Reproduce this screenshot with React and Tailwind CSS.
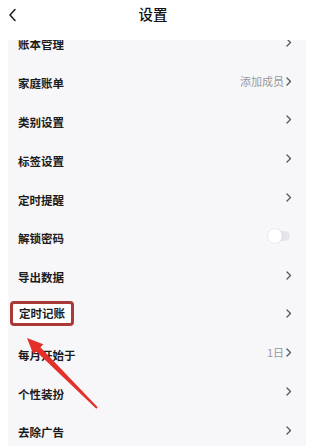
import React from "react";

const rows = [
  { label: "账本管理", type: "chev" },
  { label: "家庭账单", type: "chev", value: "添加成员" },
  { label: "类别设置", type: "chev" },
  { label: "标签设置", type: "chev" },
  { label: "定时提醒", type: "chev" },
  { label: "解锁密码", type: "toggle" },
  { label: "导出数据", type: "chev" },
  { label: "定时记账", type: "chev", boxed: true },
  { label: "每月开始于", type: "chev", value: "1日" },
  { label: "个性装扮", type: "chev" },
  { label: "去除广告", type: "chev" },
];

function Chevron() {
  return (
    <svg width="6" height="9" viewBox="0 0 6 9" className="ml-[2px]">
      <path d="M1 1 L4.5 4.5 L1 8" fill="none" stroke="#555" strokeWidth="1.3" strokeLinecap="round" strokeLinejoin="round" />
    </svg>
  );
}

function Toggle() {
  return (
    <div className="relative w-[22px] h-[14px] mr-[2px]">
      <div className="absolute left-[5px] right-0 top-[2px] h-[10px] rounded-full bg-[#e6e6ea]" />
      <div className="absolute left-0 top-0 w-[14px] h-[14px] rounded-full bg-white shadow-[0_0_2px_rgba(0,0,0,0.15)]" />
    </div>
  );
}

export default function App() {
  return (
    <div
      className="relative w-[306px] h-[446px] overflow-hidden bg-white flex flex-col"
      style={{ fontFamily: '"Noto Sans CJK SC", "Noto Sans", sans-serif' }}
    >
      <div className="h-[40px] shrink-0 flex items-center relative bg-white z-10">
        <svg width="10" height="14" viewBox="0 0 10 14" className="absolute left-[8px] top-[8px]">
          <path d="M7 1.5 L2 7 L7 12.5" fill="none" stroke="#222" strokeWidth="1.6" strokeLinecap="round" strokeLinejoin="round" />
        </svg>
        <div className="w-full text-center text-[14.5px] font-medium text-[#111] -mt-[12px] leading-none">设置</div>
      </div>
      <div className="flex-1 ml-[8px] bg-[#f7f7f9] overflow-hidden">
        <div className="-mt-[17px]">
          {rows.map((r) => (
            <div key={r.label} className="h-[38.8px] flex items-center pl-[10px] pr-[14px]">
              <div
                className={
                  r.boxed
                    ? "h-[25px] flex items-center px-[6px] -ml-[8px] mr-auto rounded-[4px] border-[3px] border-[#a93a38] bg-white"
                    : "mr-auto"
                }
              >
                <span className="text-[11.5px] font-bold text-[#1c1c1c] leading-none">{r.label}</span>
              </div>
              {r.value && <span className="text-[11px] text-[#9a9a9a] leading-none">{r.value}</span>}
              {r.type === "chev" ? <Chevron /> : <Toggle />}
            </div>
          ))}
        </div>
      </div>
      <svg className="absolute left-0 top-0 pointer-events-none" width="306" height="446" viewBox="0 0 306 446">
        <polygon
          points="27,338 43.3,344.3 40.4,347.2 97.7,407.3 96.3,408.7 36.2,351.4 33.3,354.3"
          fill="#e3302b"
        />
      </svg>
    </div>
  );
}
